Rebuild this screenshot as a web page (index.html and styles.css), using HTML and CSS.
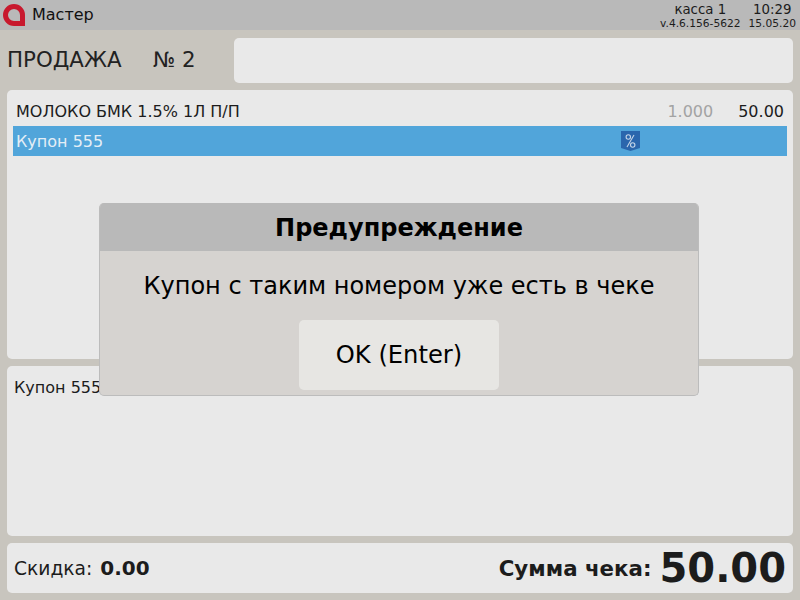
FILE: index.html
```html
<!DOCTYPE html>
<html lang="ru">
<head>
  <meta charset="UTF-8" />
  <title>Мастер</title>
  <link rel="stylesheet" href="styles.css">
</head>
<body>
  <div class="topbar">
    <svg class="logo" width="24" height="24" viewBox="0 0 24 24">
      <path d="M11 3.5 A8.5 8.5 0 0 1 19.5 12 V20.5 H11 A8.5 8.5 0 0 1 11 3.5 Z" fill="none" stroke="#c8192e" stroke-width="5"/>
    </svg>
    <div class="app-name">Мастер</div>
    <div class="info">
      <div class="info-col">
        <div class="info-top">касса 1</div>
        <div class="info-sub">v.4.6.156-5622</div>
      </div>
      <div class="info-col">
        <div class="info-top">10:29</div>
        <div class="info-sub">15.05.20</div>
      </div>
    </div>
  </div>

  <div class="sale-head">
    <div class="sale-title">ПРОДАЖА</div>
    <div class="sale-num">№ 2</div>
    <div class="sale-box"></div>
  </div>

  <div class="panel items">
    <div class="row">
      <div class="row-name">МОЛОКО БМК 1.5% 1Л П/П</div>
      <div class="row-qty">1.000</div>
      <div class="row-sum">50.00</div>
    </div>
    <div class="row selected">
      <div class="row-name">Купон 555</div>
      <svg class="coupon-icon" width="21" height="22" viewBox="0 0 21 22">
        <path d="M1 1 H20 V18 L10.5 21 L1 18 Z" fill="#2a66ad"/>
        <path d="M14 5 L7 17" stroke="#c5d5e8" stroke-width="1.1" fill="none"/>
        <circle cx="8.3" cy="7" r="2.2" stroke="#c5d5e8" stroke-width="1.1" fill="none"/>
        <circle cx="12.7" cy="15" r="2.2" stroke="#c5d5e8" stroke-width="1.1" fill="none"/>
      </svg>
    </div>
  </div>

  <div class="panel notes">Купон 555</div>

  <div class="panel totals">
    <div class="discount">Скидка: <b>0.00</b></div>
    <div class="total">
      <span class="total-label">Сумма чека:</span>
      <span class="total-value">50.00</span>
    </div>
  </div>

  <div class="dialog">
    <div class="dialog-title">Предупреждение</div>
    <div class="dialog-body">
      <div class="dialog-text">Купон с таким номером уже есть в чеке</div>
      <button class="dialog-btn">OK (Enter)</button>
    </div>
  </div>
</body>
</html>
```

FILE: styles.css
```css
html, body {
  margin: 0;
  padding: 0;
  height: 100%;
  overflow: hidden;
}
body {
  background: #c8c5be;
  font-family: "DejaVu Sans", sans-serif;
  color: #1c1c1c;
  position: relative;
}
.topbar {
  height: 30px;
  background: #b9b9b9;
  display: flex;
  align-items: center;
  padding: 0 4px 0 3px;
}
.logo {
  margin-right: 5px;
}
.app-name {
  font-size: 16px;
  color: #111;
  margin-bottom: 2px;
}
.info {
  margin-left: auto;
  display: flex;
  gap: 8px;
}
.info-col {
  text-align: center;
}
.info-top {
  font-size: 13.33px;
  line-height: 15px;
  margin-top: 1px;
}
.info-sub {
  font-size: 10.67px;
  line-height: 13px;
}
.sale-head {
  height: 60px;
  display: flex;
  align-items: center;
  padding: 0 7px;
  font-size: 21.33px;
  color: #222;
}
.sale-title {
  width: 146px;
  margin-bottom: 2px;
}
.sale-num {
  width: 81px;
  margin-bottom: 2px;
}
.sale-box {
  flex: 1;
  height: 45px;
  margin-top: 1px;
  background: #e9e9e9;
  border-radius: 5px;
}
.panel {
  background: #e9e9e9;
  border-radius: 5px;
  margin: 0 7px 7px;
}
.items {
  height: 269px;
  box-sizing: border-box;
  padding: 6px 6px 0;
}
.row {
  height: 30px;
  display: flex;
  align-items: center;
  font-size: 16px;
  padding: 0 3px;
  position: relative;
}
.row-name {
  flex: 1;
}
.row-qty {
  color: #a3a3a3;
  margin-right: 25px;
}
.row.selected {
  background: #51a5da;
  color: #e4eef6;
}
.coupon-icon {
  position: absolute;
  left: 607px;
  top: 4px;
}
.notes {
  height: 170px;
  box-sizing: border-box;
  padding: 12px 7px;
  font-size: 16px;
}
.totals {
  height: 50px;
  box-sizing: border-box;
  padding: 0 7px;
  display: flex;
  align-items: center;
  justify-content: space-between;
}
.discount {
  font-size: 18.67px;
}
.discount b {
  margin-left: 2px;
  font-size: 20px;
}
.total {
  display: flex;
  align-items: center;
  gap: 8px;
}
.total-label {
  font-size: 21.33px;
  font-weight: bold;
}
.total-value {
  font-size: 40px;
  font-weight: bold;
  line-height: 50px;
}
.dialog {
  position: absolute;
  left: 99px;
  top: 203px;
  width: 600px;
  height: 193px;
  box-sizing: border-box;
  border: 1px solid #bcbcbc;
  border-top: 0;
  border-radius: 5px;
  background: #d6d3d0;
  overflow: hidden;
  color: #000;
}
.dialog-title {
  height: 48px;
  line-height: 50px;
  background: #b9b9b9;
  text-align: center;
  font-size: 24px;
  font-weight: bold;
}
.dialog-body {
  display: flex;
  flex-direction: column;
  align-items: center;
}
.dialog-text {
  font-size: 24px;
  line-height: 30px;
  margin-top: 20px;
}
.dialog-btn {
  margin-top: 19px;
  width: 200px;
  height: 70px;
  padding: 0;
  border: none;
  border-radius: 5px;
  background: #e7e6e3;
  font-family: inherit;
  font-size: 24.2px;
  color: #000;
}
```
